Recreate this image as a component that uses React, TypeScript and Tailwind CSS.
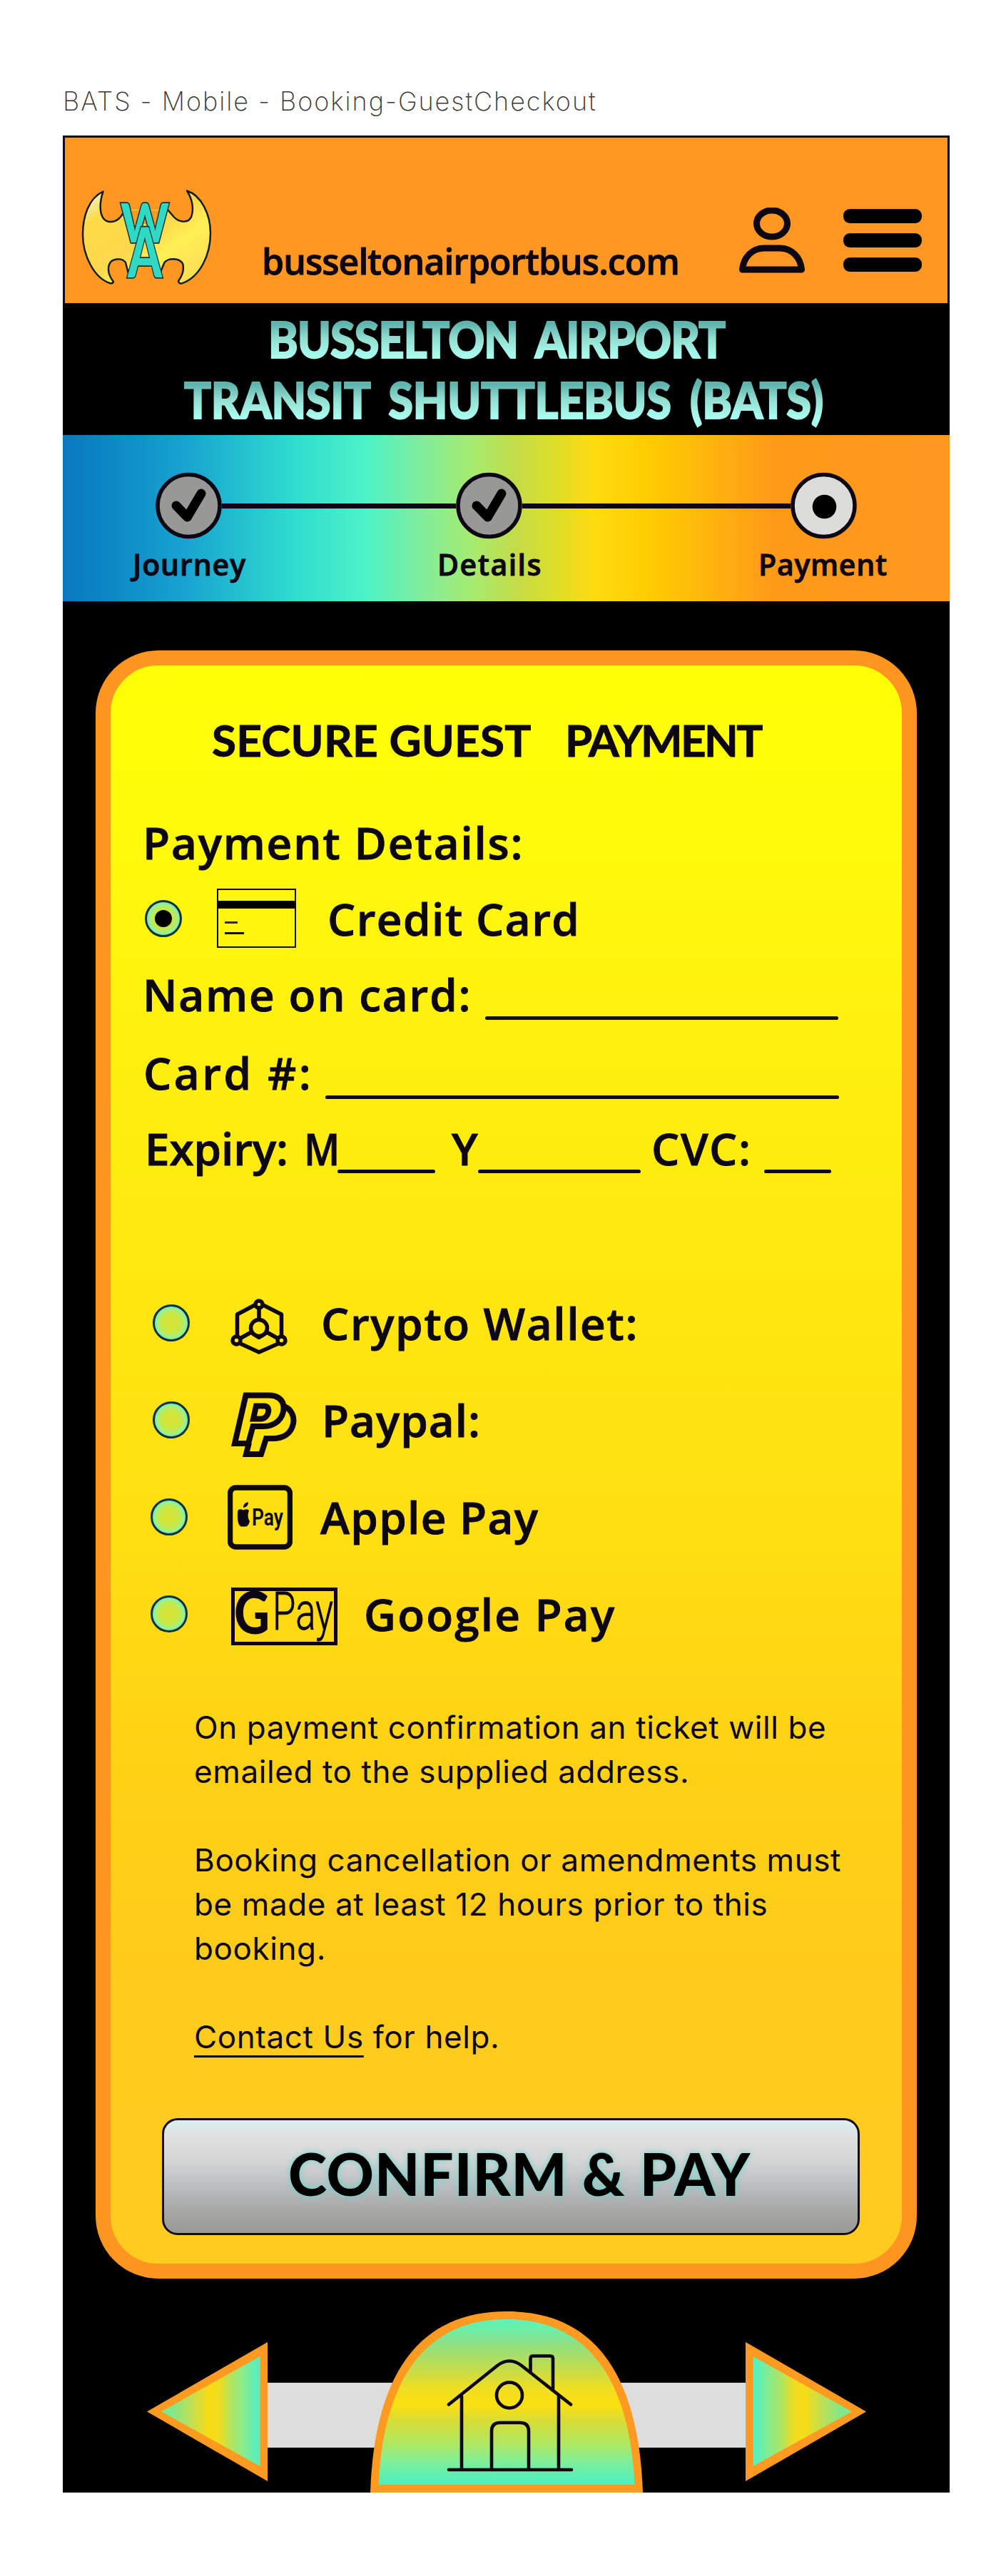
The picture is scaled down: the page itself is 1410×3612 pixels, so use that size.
import type { ReactNode } from 'react';

const INK = '#0c0712';

function BatLogo() {
  return (
    <svg className="mb-[26px] ml-[23px] h-[133px] w-[183px] shrink-0" viewBox="0 0 183 133">
      <defs>
        <linearGradient id="bat" x1="0" y1="0" x2="1" y2="1">
          <stop offset="0.05" stopColor="#f6f0c8" />
          <stop offset="0.2" stopColor="#fddb45" />
          <stop offset="0.5" stopColor="#fdd84c" />
          <stop offset="0.65" stopColor="#fff055" />
          <stop offset="1" stopColor="#fbd752" />
        </linearGradient>
      </defs>
      <path
        d="M30.5 2.5C10 12 2 38 2 63C2 92 18 124 40 131Q44 132 45 129C38 120 37 111 39 105C42 96 57 95 62 102L66 118L88 102L110 118L116 103C120 95 139 95 142.500 105C144 113 142 120 136 128Q137 133 142 131C166 122 181 92 181 61C181 34 168 8 148 1.500C155 12 158 26 154.500 37C151 47 138 47 129.500 38L121 28H60C56 36 51 45 40.500 45C25 44 24 22 30.500 2.500Z"
        fill="url(#bat)"
      />
      <path
        d="M60 30C56 38 51 45 40.500 45C25 44 24 22 30.500 2.500C10 12 2 38 2 63C2 92 18 124 40 131Q44 132 45 129C38 120 37 111 39 105C42 96 57 95 62 102L66 118M110 118L116 103C120 95 139 95 142.500 105C144 113 142 120 136 128Q137 133 142 131C166 122 181 92 181 61C181 34 168 8 148 1.500C155 12 158 26 154.500 37C151 47 138 47 129.500 38L121 28"
        fill="none"
        stroke="#0d1a20"
        strokeWidth="2.400"
        strokeLinejoin="round"
      />
      <path d="M63 29H117L104 48H72Z" fill="#ff9822" />
      <g fontFamily="Lato" fontWeight="900" fill="#30d9c4" stroke="#0c3338" strokeWidth="3.500" paintOrder="stroke">
        <text x="55" y="74" fontSize="77" textLength="68" lengthAdjust="spacingAndGlyphs">W</text>
        <text x="65" y="123" fontSize="98" textLength="48" lengthAdjust="spacingAndGlyphs">A</text>
      </g>
    </svg>
  );
}

function UserIcon() {
  return (
    <svg className="mb-[42px] h-[92px] w-[92px] shrink-0" viewBox="0 0 92 92" fill="none" stroke={INK} strokeWidth="9" strokeLinejoin="round">
      <ellipse cx="46" cy="22.500" rx="21.500" ry="18.500" />
      <path d="M4.500 87C6 70 18 57 35 57H57C74 57 86 70 87.500 87Z" />
    </svg>
  );
}

function StepDot({ done }: { done?: boolean }) {
  return (
    <svg className="h-[94px] w-[93px] shrink-0" viewBox="0 0 93 94">
      <circle cx="46.500" cy="47" r="43.500" fill={done ? '#989896' : '#dcdcda'} stroke={INK} strokeWidth="5.500" />
      {done ? (
        <path d="M29 47L44.500 63L64 30" fill="none" stroke="#000" strokeWidth="13" strokeLinecap="round" strokeLinejoin="round" />
      ) : (
        <circle cx="47.500" cy="48.500" r="16.800" fill="#000" />
      )}
    </svg>
  );
}

function Radio({ checked }: { checked?: boolean }) {
  return (
    <span className="flex size-[52px] shrink-0 items-center justify-center rounded-full border-[3.5px] border-[#10303a] bg-[radial-gradient(closest-side,#d8e234_15%,#c8e844_60%,#a4f080_85%,#70f0c0_100%)]">
      {checked && <span className="size-6 rounded-full bg-black" />}
    </span>
  );
}

function CardIcon() {
  return (
    <span className="flex h-[83px] w-[111px] flex-col border-[2.5px] border-[#0c0712]">
      <span className="mt-[15px] h-[11px] bg-black" />
      <span className="mt-[18px] ml-[9px] h-[3px] w-[18px] bg-[#3a2c14]" />
      <span className="mt-[12px] ml-[9px] h-[3px] w-[27px] bg-[#0c0712]" />
    </span>
  );
}

function CryptoIcon() {
  return (
    <svg className="h-[80px] w-[80px]" viewBox="0 0 80 80" fill="none" stroke={INK} strokeWidth="5.500" strokeLinejoin="round">
      <path d="M34 9L9.500 22V53M46 9L71.500 22V53M14 63L40 75L67 63M40 12V31M29 47L13 56M51 47L67 56M30 48L40 54.500L50 48" />
      <circle cx="40" cy="41" r="11.500" />
      <circle cx="40" cy="8" r="5" />
      <circle cx="8.500" cy="58.500" r="5.500" />
      <circle cx="71.500" cy="58.500" r="5.500" />
    </svg>
  );
}

function PaypalIcon() {
  return (
    <svg className="h-[92px] w-[92px]" viewBox="0 0 92 92" fill="none" stroke={INK} strokeWidth="8">
      <path d="M20.500 4.500L5 72H24L30.500 48H45C61 48 73.500 38 73.500 22C73.500 10 64 4.500 53 4.500Z" />
      <path d="M35 19.500H47C56 20 53 36.500 42 37.500H31Z" />
      <path d="M73 20C83 22 89 33 87 44C84 59 72 65 58 65H49L42 87H21L25 71" />
    </svg>
  );
}

function ApplePayIcon() {
  return (
    <svg className="h-[91px] w-[91px]" viewBox="0 0 91 91" fill={INK}>
      <rect x="3.500" y="4" width="84" height="83" rx="8" fill="none" stroke={INK} strokeWidth="7.500" />
      <path d="M14 38C14 34 18 33.500 22 35.500C26 33.500 29 34 30 36.500C28 41 28 46 31 51C30 55 28 58.500 25 58.500H19C14 57 13.500 46 14 38Z" />
      <path d="M22 32C22 27 25 24.500 29 24.500C29 29 26 31.500 22 32Z" />
      <text x="34" y="57" fontFamily="Roboto" fontSize="33" textLength="44" lengthAdjust="spacingAndGlyphs">Pay</text>
    </svg>
  );
}

function GPayIcon() {
  return (
    <svg className="h-[81px] w-[149px]" viewBox="0 0 149 81" fill={INK}>
      <rect x="2.500" y="2.500" width="144" height="76" fill="none" stroke={INK} strokeWidth="5" />
      <text x="4" y="65" fontFamily="Lato" fontWeight="900" fontSize="82" textLength="50" lengthAdjust="spacingAndGlyphs">G</text>
      <text x="58" y="59" fontFamily="Roboto" fontSize="75" textLength="85" lengthAdjust="spacingAndGlyphs" fontWeight="300" stroke={INK} strokeWidth="0.800">Pay</text>
    </svg>
  );
}

function Blank({ className }: { className: string }) {
  return <span className={`h-[5px] shrink-0 rounded-full bg-[#0e0c14] ${className}`} />;
}

function Method({ className, icon, iconBox, children }: { className: string; icon: ReactNode; iconBox: string; children: ReactNode }) {
  return (
    <div className={`flex h-[136px] items-center ${className}`}>
      <Radio />
      <span className={`flex shrink-0 ${iconBox}`}>{icon}</span>
      {children}
    </div>
  );
}

function Arrow({ flip }: { flip?: boolean }) {
  const id = flip ? 'arrowRight' : 'arrowLeft';
  return (
    <svg className={flip ? 'mb-[16px] h-[195px] w-[169px] shrink-0 -scale-x-100' : 'mb-[16px] h-[195px] w-[169px] shrink-0'} viewBox="0 0 169 195">
      <defs>
        <linearGradient id={id}>
          <stop offset="0.100" stopColor="#7fe88c" />
          <stop offset="0.300" stopColor="#bfdf55" />
          <stop offset="0.480" stopColor="#f8dc14" />
          <stop offset="0.600" stopColor="#ecdc24" />
          <stop offset="0.700" stopColor="#b4e45c" />
          <stop offset="0.850" stopColor="#82ec92" />
          <stop offset="0.950" stopColor="#5cf0b8" />
        </linearGradient>
      </defs>
      <path d="M0 97.500L169 0V195Z" fill="#ff9a20" />
      <path d="M20 97.500L158.500 20V174Z" fill={`url(#${id})`} />
    </svg>
  );
}

function HomeDome() {
  return (
    <svg className="relative z-10 -mx-[46px] h-[254px] w-[382px] shrink-0" viewBox="0 0 382 254">
      <defs>
        <linearGradient id="dome" x1="0" y1="0" x2="0" y2="1">
          <stop offset="0.030" stopColor="#62f2b4" />
          <stop offset="0.150" stopColor="#8ee082" />
          <stop offset="0.300" stopColor="#c4dc4c" />
          <stop offset="0.420" stopColor="#f0de20" />
          <stop offset="0.520" stopColor="#fae010" />
          <stop offset="0.620" stopColor="#d4dc38" />
          <stop offset="0.750" stopColor="#b0e860" />
          <stop offset="0.860" stopColor="#80ee98" />
          <stop offset="1" stopColor="#48f0c4" />
        </linearGradient>
      </defs>
      <path d="M0 254C6 80 74 0 191 0S376 80 382 254Z" fill="#ff9a20" />
      <path d="M11.500 243C19 86 84 11 191 11S363 86 370.500 243Z" fill="url(#dome)" />
      <g fill="none" stroke={INK} strokeWidth="4.600" strokeLinecap="round" strokeLinejoin="round">
        <path d="M110 222H282M128 222V119M264 222V119" />
        <path d="M110 130.500L178 76Q195 63 212 76L281 130.500" />
        <path d="M224.500 84V66Q224.500 62.500 228 62.500H252Q256 62.500 256 66V109" />
        <circle cx="195" cy="117.500" r="18" />
        <path d="M170 222V168Q170 156 182 156H210Q222 156 222 168V222" />
      </g>
    </svg>
  );
}

export default function App() {
  return (
    <div className="flex h-[3612px] w-[1410px] flex-col bg-white text-[#0c0712]">
      <p className="h-[190px] pt-[112px] pl-[88px] font-['Inter'] text-[36px] leading-[60px] font-extralight tracking-[1.95px] whitespace-nowrap text-[#3a3636]">
        BATS - Mobile - Booking-GuestCheckout
      </p>

      <main className="ml-[88px] flex h-[3305px] w-[1243px] flex-col bg-black font-['Open_Sans'] font-semibold [-webkit-text-stroke:0.9px_#0c0712]">
        <header className="flex h-[235px] shrink-0 items-end border-3 border-b-0 border-[#150a12] bg-[#ff9822]">
          <BatLogo />
          <span className="mb-[29px] ml-[70px] w-[669px] text-[50px] leading-[60px] tracking-[-1px]">busseltonairportbus.com</span>
          <UserIcon />
          <div className="mb-[44px] ml-[54px] flex w-[110px] flex-col gap-[14px]">
            <span className="h-[20px] rounded-[9px] bg-black" />
            <span className="h-[20px] rounded-[9px] bg-black" />
            <span className="h-[20px] rounded-[9px] bg-black" />
          </div>
        </header>

        <h1 className="flex h-[185px] shrink-0 flex-col pt-[8px] font-['Lato'] text-[70px] leading-[85px] font-black whitespace-nowrap [-webkit-text-stroke:2px_transparent]">
          <span className="ml-[288px] origin-left scale-x-90 self-start bg-linear-to-b from-[#5fb5ae] from-25% via-[#93dfd2] via-50% to-[#a8fff0] to-80% bg-clip-text pr-2 tracking-[-1px] text-transparent [word-spacing:13px]">
            BUSSELTON AIRPORT
          </span>
          <span className="ml-[170px] origin-left scale-x-90 self-start bg-linear-to-b from-[#5fb5ae] from-25% via-[#93dfd2] via-50% to-[#a8fff0] to-80% bg-clip-text pr-2 tracking-[-0.3px] text-transparent [word-spacing:13px]">
            TRANSIT SHUTTLEBUS (BATS)
          </span>
        </h1>

        <nav className="flex h-[233px] shrink-0 flex-col bg-[linear-gradient(90deg,#0a78c0_0%,#0d8ac6_6%,#18a4d0_14%,#2fdccf_26%,#4cf2c8_34%,#7deda0_40%,#a5eb70_46%,#c4dc48_51%,#dade2c_55%,#fedb10_60%,#ffcc00_66%,#ffb40e_73%,#ff9a18_80%,#ff9822_100%)] pt-[52px]">
          <div className="flex items-center pl-[130px]">
            <StepDot done />
            <span className="h-[7px] w-[328px] bg-[#0c0712]" />
            <StepDot done />
            <span className="h-[7px] w-[376px] bg-[#0c0712]" />
            <StepDot />
          </div>
          <div className="mt-[10px] flex pl-[98px] text-[41px] leading-[50px]">
            <span className="w-[427px] tracking-[0.9px]">Journey</span>
            <span className="w-[450px] tracking-[1.5px]">Details</span>
            <span className="tracking-[0.7px]">Payment</span>
          </div>
        </nav>

        <section className="mt-[69px] ml-[46px] flex h-[2283px] w-[1151px] shrink-0 flex-col rounded-[88px] border-[21px] border-[#fd9620] bg-[linear-gradient(180deg,#ffff05_0%,#fffb0a_10%,#fff00f_24%,#ffe80f_38%,#ffde12_55%,#ffd015_70%,#ffcb1c_82%,#ffcb20_100%)] bg-origin-border pt-[54px] text-[62px] leading-none whitespace-nowrap">
          <h2 className="flex h-[100px] items-center pl-[142px] font-['Lato'] font-bold">
            <span className="w-[495px] tracking-[0.3px]">SECURE GUEST</span>
            <span className="tracking-[-2.6px]">PAYMENT</span>
          </h2>

          <h3 className="mt-[40px] flex h-[107px] items-center pl-[45px] tracking-[1.8px]">Payment Details:</h3>
          <div className="flex h-[107px] items-center pl-[48px]">
            <Radio checked />
            <span className="mr-[44px] ml-[49px]">
              <CardIcon />
            </span>
            <span className="tracking-[1.4px]">Credit Card</span>
          </div>
          <div className="flex items-end pl-[45px] leading-[107px]">
            <span className="w-[480px] tracking-[1.8px]">Name on card:</span>
            <Blank className="mb-[18px] w-[495px]" />
          </div>
          <div className="flex items-end pl-[46px] leading-[112px]">
            <span className="w-[255px] tracking-[3.5px]">Card #:</span>
            <Blank className="mb-[19px] w-[720px]" />
          </div>
          <div className="flex items-end pl-[48px] leading-[100px]">
            <span className="w-[223px] tracking-[-0.1px]">Expiry:</span>
            <span className="w-[47px]">
              <span className="inline-block origin-left scale-x-[0.88]">M</span>
            </span>
            <Blank className="mb-[15px] w-[137px]" />
            <span className="ml-[23px] w-[37px]">Y</span>
            <Blank className="mb-[15px] w-[228px]" />
            <span className="ml-[15px] w-[158px] tracking-[1.6px]">CVC:</span>
            <Blank className="mb-[15px] w-[94px]" />
          </div>

          <div className="mt-[127px] flex flex-col">
            <Method className="pl-[59px]" iconBox="ml-[57px] w-[127px] pt-[12px]" icon={<CryptoIcon />}>
              <span className="tracking-[1.6px]">Crypto Wallet:</span>
            </Method>
            <Method className="pl-[59px]" iconBox="ml-[58px] w-[127px] pt-[14px]" icon={<PaypalIcon />}>
              <span className="tracking-[1px]">Paypal:</span>
            </Method>
            <Method className="pl-[56px]" iconBox="ml-[56px] w-[130px]" icon={<ApplePayIcon />}>
              <span className="tracking-[1.3px]">Apple Pay</span>
            </Method>
            <Method className="pl-[56px]" iconBox="ml-[61px] w-[186px] pt-[6px]" icon={<GPayIcon />}>
              <span className="tracking-[2.2px]">Google Pay</span>
            </Method>
          </div>

          <div className="mt-[60px] flex flex-col gap-[62px] pl-[117px] font-['Inter'] text-[44px] leading-[62px] font-normal tracking-[0.6px] [-webkit-text-stroke:0]">
            <p>
              On payment confirmation an ticket will be
              <br />
              emailed to the supplied address.
            </p>
            <p>
              Booking cancellation or amendments must
              <br />
              be made at least 12 hours prior to this
              <br />
              booking.
            </p>
            <p>
              <a className="underline decoration-[3px] underline-offset-[10px]">Contact Us</a> for help.
            </p>
          </div>

          <button className="mt-[83px] ml-[72px] flex h-[164px] w-[978px] items-center justify-center rounded-[22px] border-3 border-[#150d18] bg-[linear-gradient(180deg,#d8f0f2_0%,#e0e0e0_14%,#d6d6d6_35%,#b8bcbe_60%,#a9aaa8_78%,#989896_100%)] pb-[10px] pl-[24px] font-['Lato'] text-[82px] font-black tracking-[0.9px] text-black [-webkit-text-stroke:0] [text-shadow:0_0_8px_#5fd9cc]">
            CONFIRM &amp; PAY
          </button>
        </section>

        <footer className="flex h-[300px] shrink-0 items-end pl-[118px]">
          <Arrow />
          <span className="mb-[63px] h-[91px] w-[190px] shrink-0 bg-[#dddddd]" />
          <HomeDome />
          <span className="mb-[63px] h-[91px] w-[190px] shrink-0 bg-[#dddddd]" />
          <Arrow flip />
        </footer>
      </main>
    </div>
  );
}
